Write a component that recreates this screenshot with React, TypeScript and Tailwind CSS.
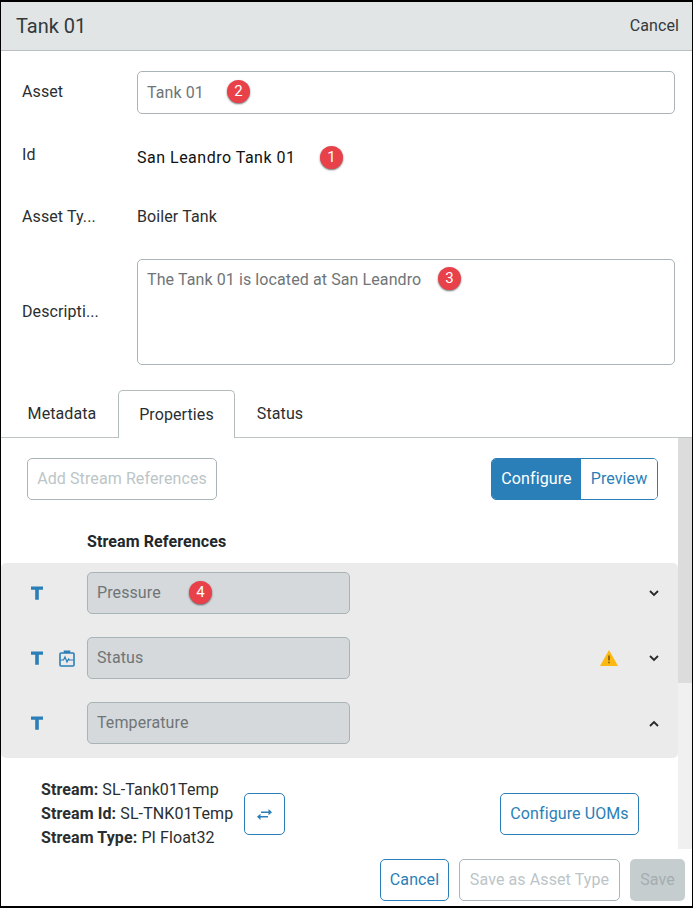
import { FunctionComponent } from "react";

const Badge: FunctionComponent<{ n: number; className: string }> = ({ n, className }) => (
  <span
    className={`absolute flex h-[23px] w-[23px] items-center justify-center rounded-full bg-[#e8414a] text-[15px] leading-none text-white shadow-[0_1px_2px_rgba(0,0,0,0.55)] ${className}`}
  >
    {n}
  </span>
);

const TIcon = () => (
  <svg width="14" height="14" viewBox="0 0 14 14" className="shrink-0 text-[#2a7fb8]">
    <path d="M1 0.5h12v3.2H8.8v10H5.2v-10H1z" fill="currentColor" />
  </svg>
);

const ClipIcon = () => (
  <svg width="16" height="17" viewBox="0 0 16 17" fill="none" stroke="#2a7fb8" strokeWidth="1.6" className="shrink-0">
    <rect x="1" y="3" width="14" height="13" rx="1" />
    <path d="M5.5 3V1.2h5V3" fill="#2a7fb8" />
    <path d="M1.5 10h3l1.5-3 2 5 1.5-3 1 1h4" strokeWidth="1.2" />
  </svg>
);

const Chevron: FunctionComponent<{ up?: boolean }> = ({ up }) => (
  <svg width="10" height="7" viewBox="0 0 10 7" fill="none" stroke="#26282a" strokeWidth="1.8">
    <path d={up ? "M1 6l4-4 4 4" : "M1 1l4 4 4-4"} />
  </svg>
);

const Row: FunctionComponent<{ label: string; icon?: boolean; warn?: boolean; up?: boolean; badge?: boolean }> = ({
  label,
  icon,
  warn,
  up,
  badge,
}) => (
  <div className="relative flex h-[42px] items-center">
    <div className="flex w-[86px] shrink-0 items-center gap-[15px] pl-[29px]">
      <TIcon />
      {icon && <ClipIcon />}
    </div>
    <div className="flex h-[42px] w-[263px] items-center rounded-[5px] border border-[#a9b4b6] bg-[#d5d9db] pl-[9px] text-[#6f7577]">
      {label}
    </div>
    {badge && <Badge n={4} className="left-[188px] top-[9px]" />}
    <div className="ml-auto flex items-center gap-[31px] pr-[19px]">
      {warn && (
        <svg width="18" height="16" viewBox="0 0 18 16">
          <path d="M9 0l9 16H0z" fill="#fdb913" />
          <path d="M8.2 5.5h1.6v5H8.2zM8.2 11.7h1.6v1.6H8.2z" fill="#7a5a00" />
        </svg>
      )}
      <Chevron up={up} />
    </div>
  </div>
);

export default function App() {
  return (
    <div className="h-[910px] w-[693px] bg-white font-['Roboto',sans-serif] text-[16px] tracking-[0.1px]">
      <div className="flex h-[908px] flex-col border-y-2 border-x border-black text-[#2a2e30]">
        <header className="flex h-[49px] shrink-0 items-center justify-between border-b border-[#b9c0c3] bg-[#e1e5e6] pl-[15px] pr-[13px]">
          <span className="text-[20px] tracking-normal text-[#34393b]">Tank 01</span>
          <span className="text-[#34393b]">Cancel</span>
        </header>

        <section className="relative shrink-0 pl-[21px] pr-[17px]">
          <div className="mt-[20px] flex h-[43px] items-center">
            <span className="w-[115px] pb-[2px]">Asset</span>
            <div className="flex h-[43px] flex-1 items-center rounded-[5px] border border-[#a9b4b6] pl-[9px] text-[#6f7577]">
              Tank 01
            </div>
          </div>
          <Badge n={2} className="left-[226px] top-[29px]" />
          <div className="mt-[22px] flex h-[38px] items-start">
            <span className="w-[115px] pt-[7px]">Id</span>
            <span className="pt-[10px] tracking-[0.5px] text-[#111]">San Leandro Tank 01</span>
          </div>
          <Badge n={1} className="left-[319px] top-[95px]" />
          <div className="mt-[22px] flex h-[36px] items-start">
            <span className="w-[115px] pt-[9px]">Asset Ty...</span>
            <span className="pt-[9px]">Boiler Tank</span>
          </div>
          <div className="mt-[27px] flex h-[106px] items-center">
            <span className="w-[115px]">Descripti...</span>
            <div className="h-[106px] flex-1 rounded-[5px] border border-[#a9b4b6] pl-[9px] pt-[8px] text-[#6f7577]">
              The Tank 01 is located at San Leandro
            </div>
          </div>
          <Badge n={3} className="left-[437px] top-[216px]" />
        </section>

        <nav className="mt-[25px] flex h-[48px] shrink-0 items-end border-b border-[#bfc4c6] pl-[5px]">
          <span className="flex h-[47px] w-[112px] items-center justify-center pt-[1px]">Metadata</span>
          <span className="-mb-px flex h-[48px] w-[117px] items-center justify-center rounded-t-[5px] border border-b-0 border-[#b4bbbd] bg-white pt-[1px]">
            Properties
          </span>
          <span className="flex h-[47px] w-[90px] items-center justify-center pt-[1px]">Status</span>
        </nav>

        <div className="flex min-h-0 flex-1">
          <main className="min-w-0 flex-1 overflow-hidden">
            <div className="flex items-center justify-between pl-[26px] pr-[20px] pt-[20px]">
              <button className="h-[42px] w-[190px] rounded-[5px] border border-[#a9b4b6] text-[#bcc5c7]">
                Add Stream References
              </button>
              <div className="flex h-[42px] overflow-hidden rounded-[5px] border border-[#2a7fb8]">
                <span className="flex w-[89px] items-center justify-center bg-[#2a7fb8] text-white">Configure</span>
                <span className="flex w-[76px] items-center justify-center bg-white text-[#2a7fb8]">Preview</span>
              </div>
            </div>
            <div className="mt-[33px] pl-[86px] font-bold leading-[18px] text-[#22272a]">Stream References</div>
            <div className="mt-[12px] flex h-[195px] flex-col gap-[23px] rounded-[5px] bg-[#ebebeb] pt-[9px]">
              <Row label="Pressure" badge />
              <Row label="Status" icon warn />
              <Row label="Temperature" up />
            </div>
            <div className="flex items-center pl-[40px] pr-[39px] pt-[20px]">
              <div className="leading-[24px]">
                <div>
                  <b className="font-bold">Stream:</b> SL-Tank01Temp
                </div>
                <div>
                  <b className="font-bold">Stream Id:</b> SL-TNK01Temp
                </div>
                <div>
                  <b className="font-bold">Stream Type:</b> PI Float32
                </div>
              </div>
              <button className="ml-[11px] flex h-[42px] w-[41px] items-center justify-center rounded-[5px] border border-[#2a7fb8]">
                <svg width="15" height="11" viewBox="0 0 15 11" fill="#2a7fb8">
                  <path d="M4 2.5h7.5V0L15 3.2l-3.5 3V4H4zM11 7H3.5V4.8L0 7.8l3.5 3.2V8.5H11z" />
                </svg>
              </button>
              <button className="ml-auto h-[42px] w-[139px] rounded-[5px] border border-[#2a7fb8] text-[#2a7fb8]">
                Configure UOMs
              </button>
            </div>
          </main>
          <div className="w-[14px] shrink-0 bg-[#f0f0f0]">
            <div className="h-[245px] bg-[#dcdcdc]" />
          </div>
        </div>

        <footer className="flex h-[57px] shrink-0 items-start justify-end gap-[10px] pr-[7px] pt-[10px]">
          <button className="h-[42px] w-[69px] rounded-[5px] border border-[#2a7fb8] text-[#2a7fb8]">Cancel</button>
          <button className="h-[42px] w-[161px] rounded-[5px] border border-[#a9b4b6] text-[#bcc5c7]">
            Save as Asset Type
          </button>
          <button className="h-[42px] w-[55px] rounded-[5px] bg-[#c5cdcf] text-[#a4adaf]">Save</button>
        </footer>
      </div>
    </div>
  );
}
